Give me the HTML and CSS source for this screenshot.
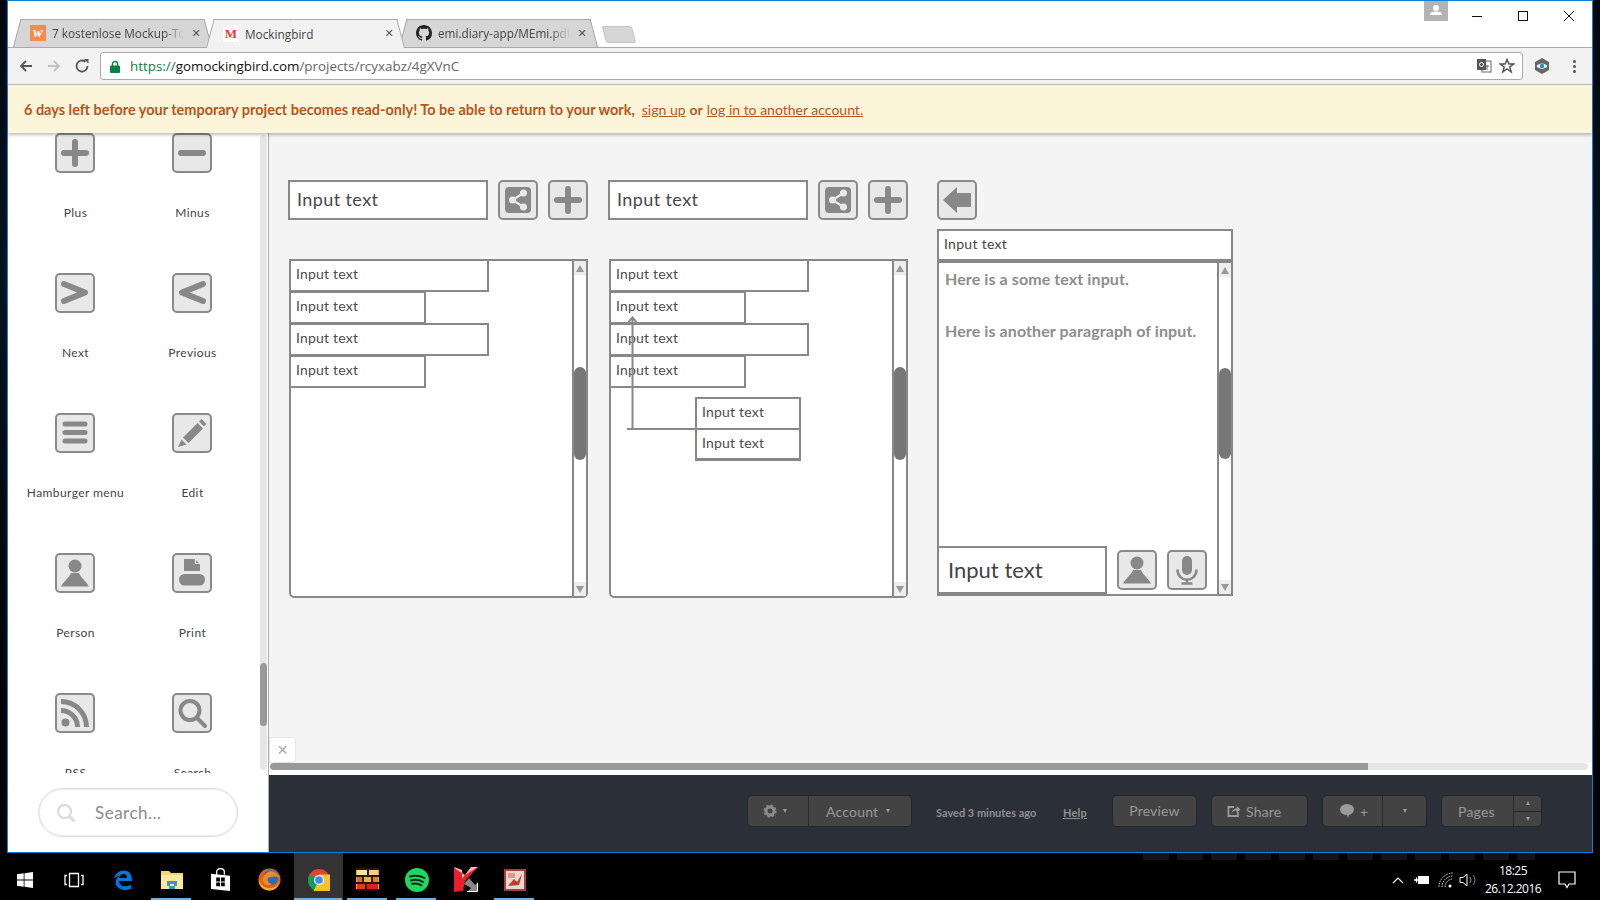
FILE: index.html
```html
<!DOCTYPE html>
<html lang="en">
<head>
<meta charset="utf-8">
<title>Mockingbird</title>
<link rel="stylesheet" href="styles.css">
</head>
<body>
<svg class="sprite" xmlns="http://www.w3.org/2000/svg">
  <symbol id="g-plus" viewBox="0 0 40 40"><path d="M9 20H31M20 9V31" class="st6"/></symbol>
  <symbol id="g-minus" viewBox="0 0 40 40"><path d="M9 20H31" class="st6"/></symbol>
  <symbol id="g-next" viewBox="0 0 40 40"><path d="M9 11L30 19.5L9 28" class="st6"/></symbol>
  <symbol id="g-prev" viewBox="0 0 40 40"><path d="M31 11L10 19.5L31 28" class="st6"/></symbol>
  <symbol id="g-burger" viewBox="0 0 40 40"><path d="M10 11H30M10 19.5H30M10 28H30" class="st5"/></symbol>
  <symbol id="g-edit" viewBox="0 0 40 40"><path class="fl" d="M11 24.500L25.500 10L31 15.500L16.500 30ZM9.500 26.500L14.500 31.500L6 34ZM27 8.500L29.500 6L34.500 11L32 13.500Z"/></symbol>
  <symbol id="g-person" viewBox="0 0 40 40"><circle class="fl" cx="20" cy="13" r="6.500"/><path class="fl" d="M6 33.500C9 28 14 25 16 20H24C26 25 31 28 34 33.500Z"/></symbol>
  <symbol id="g-print" viewBox="0 0 40 40"><path class="fl" d="M12 6H23L28 11V18H12Z"/><rect class="fl" x="7" y="21" width="26" height="11.500" rx="5.500"/><path d="M23.500 5.500V10.500H28.500" class="st-light"/></symbol>
  <symbol id="g-rss" viewBox="0 0 40 40"><circle class="fl" cx="10.500" cy="29.500" r="4"/><path d="M6 8.500A25.500 25.500 0 0 1 31.500 34M6 17.500A16.500 16.500 0 0 1 22.500 34" class="st-butt"/></symbol>
  <symbol id="g-search" viewBox="0 0 40 40"><circle cx="18" cy="17.500" r="9.500" class="st4"/><path d="M25 25L33 33" class="st4"/></symbol>
  <symbol id="g-share" viewBox="0 0 40 40"><rect class="fl" x="7" y="7" width="26" height="26" rx="4"/><path class="st-inner" d="M25.500 13L14.500 20L25.500 27"/><circle class="fl-light" cx="14.500" cy="20" r="3.500"/><circle class="fl-light" cx="25.500" cy="13" r="3.500"/><circle class="fl-light" cx="25.500" cy="27" r="3.500"/></symbol>
  <symbol id="g-back" viewBox="0 0 40 40"><path class="fl" d="M6 20L20 7V13H34V27H20V33Z"/></symbol>
  <symbol id="g-mic" viewBox="0 0 40 40"><rect class="fl" x="15" y="6" width="10" height="19" rx="5"/><path d="M10.500 19.500C10.500 33 29.500 33 29.500 19.500M20 29.500V33M14.500 33.500H25.500" class="st-mic"/></symbol>
</svg>

<div class="window">
  <header class="titlebar">
    <div class="tabs">
      <div class="tab">
        <span class="fav fav-w">w</span>
        <span class="tab-title">7 kostenlose Mockup-Tools</span>
        <span class="tab-x">✕</span>
      </div>
      <div class="tab tab-active">
        <span class="fav fav-m">M</span>
        <span class="tab-title">Mockingbird</span>
        <span class="tab-x">✕</span>
      </div>
      <div class="tab">
        <svg class="fav" viewBox="0 0 16 16"><path fill="#222" d="M8 0C3.58 0 0 3.58 0 8c0 3.54 2.29 6.53 5.47 7.59.4.07.55-.17.55-.38 0-.19-.01-.82-.01-1.49-2.01.37-2.53-.49-2.69-.94-.09-.23-.48-.94-.82-1.13-.28-.15-.68-.52-.01-.53.63-.01 1.08.58 1.23.82.72 1.21 1.87.87 2.33.66.07-.52.28-.87.51-1.07-1.78-.2-3.64-.89-3.64-3.95 0-.87.31-1.59.82-2.15-.08-.2-.36-1.02.08-2.12 0 0 .67-.21 2.2.82.64-.18 1.32-.27 2-.27.68 0 1.36.09 2 .27 1.53-1.04 2.2-.82 2.2-.82.44 1.1.16 1.92.08 2.12.51.56.82 1.27.82 2.15 0 3.07-1.87 3.75-3.65 3.95.29.25.54.73.54 1.48 0 1.07-.01 1.93-.01 2.2 0 .21.15.46.55.38A8.013 8.013 0 0016 8c0-4.420-3.580-8-8-8z"/></svg>
        <span class="tab-title">emi.diary-app/MEmi.pdf</span>
        <span class="tab-x">✕</span>
      </div>
      <div class="newtab"></div>
    </div>
    <div class="avatar">
      <svg viewBox="0 0 24 20" width="24" height="20"><circle cx="12" cy="7" r="3" fill="#fff"/><path d="M6 14C6 11 9 10.500 12 10.500S18 11 18 14Z" fill="#fff"/></svg>
    </div>
    <div class="winctl">
      <svg viewBox="0 0 12 12" width="12" height="12"><path d="M1 6.500H11" class="ctl"/></svg>
      <svg viewBox="0 0 12 12" width="12" height="12"><rect x="1.500" y="1.500" width="9" height="9" class="ctl"/></svg>
      <svg viewBox="0 0 12 12" width="12" height="12"><path d="M1 1L11 11M11 1L1 11" class="ctl"/></svg>
    </div>
  </header>

  <nav class="toolbar">
    <svg class="nav-ico" viewBox="0 0 16 16"><path d="M14 8H3M8 3L3 8L8 13" class="nav-st"/></svg>
    <svg class="nav-ico nav-off" viewBox="0 0 16 16"><path d="M2 8H13M8 3L13 8L8 13" class="nav-st"/></svg>
    <svg class="nav-ico" viewBox="0 0 16 16"><path d="M13.500 8A5.500 5.500 0 1 1 11.500 3.800" class="nav-st"/><path d="M10 1H14.500V5.500Z" fill="#555"/></svg>
    <div class="omnibox">
      <svg class="lock" viewBox="0 0 10 13" width="10" height="13"><path d="M2.500 6V4A2.500 2.500 0 0 1 7.500 4V6" fill="none" stroke="#0b8043" stroke-width="1.400"/><rect y="5.500" width="10" height="7.500" rx="1" fill="#0b8043"/></svg>
      <span class="url"><span class="url-s">https://</span><span class="url-h">gomockingbird.com</span>/projects/rcyxabz/4gXVnC</span>
      <svg class="omni-ico" viewBox="0 0 16 16" width="16" height="16"><rect x="6" y="3" width="9" height="11" fill="#fff" stroke="#666"/><rect x="1" y="1" width="9" height="11" fill="#555"/><circle cx="5.500" cy="6.500" r="2" fill="none" stroke="#fff"/><path d="M9.500 8H13M11 7V12" stroke="#666" fill="none"/></svg>
      <svg class="omni-ico" viewBox="0 0 16 16" width="16" height="16"><path d="M8 1.500L9.900 6H14.700L10.800 9L12.200 14L8 11L3.800 14L5.200 9L1.300 6H6.100Z" fill="none" stroke="#555" stroke-width="1.500"/></svg>
    </div>
    <svg class="ext" viewBox="0 0 18 18" width="18" height="18"><path d="M9 1L16 5V13L9 17L2 13V5Z" fill="#666"/><path d="M3.500 9C6.500 5.500 11.500 5.500 14.500 9C11.500 12.500 6.500 12.500 3.500 9Z" fill="#fff"/><circle cx="9" cy="9" r="2.200" fill="#1a8fc9"/></svg>
    <div class="dots"><i></i><i></i><i></i></div>
  </nav>

  <div class="banner">
    <strong class="banner-msg">6 days left before your temporary project becomes read-only! To be able to return to your work,</strong>
    <a class="banner-link">sign up</a>
    <strong class="banner-or">or</strong>
    <a class="banner-link">log in to another account.</a>
  </div>

  <main class="main">
    <aside class="sidebar">
      <div class="palette">
        <div class="pal-grid">
          <div class="pal-item"><svg class="tile"><use href="#g-plus"/></svg><span>Plus</span></div>
          <div class="pal-item"><svg class="tile"><use href="#g-minus"/></svg><span>Minus</span></div>
          <div class="pal-item"><svg class="tile"><use href="#g-next"/></svg><span>Next</span></div>
          <div class="pal-item"><svg class="tile"><use href="#g-prev"/></svg><span>Previous</span></div>
          <div class="pal-item"><svg class="tile"><use href="#g-burger"/></svg><span>Hamburger menu</span></div>
          <div class="pal-item"><svg class="tile"><use href="#g-edit"/></svg><span>Edit</span></div>
          <div class="pal-item"><svg class="tile"><use href="#g-person"/></svg><span>Person</span></div>
          <div class="pal-item"><svg class="tile"><use href="#g-print"/></svg><span>Print</span></div>
          <div class="pal-item"><svg class="tile"><use href="#g-rss"/></svg><span>RSS</span></div>
          <div class="pal-item"><svg class="tile"><use href="#g-search"/></svg><span>Search</span></div>
        </div>
        <div class="pal-scroll"><div class="pal-thumb"></div></div>
      </div>
      <div class="searchbox">
        <svg viewBox="0 0 20 20" width="20" height="20"><circle cx="8.500" cy="8.500" r="6.500" fill="none" stroke="#ddd" stroke-width="2.500"/><path d="M13 13L18.500 18.500" stroke="#ddd" stroke-width="3"/></svg>
        <span>Search...</span>
      </div>
    </aside>

    <section class="workspace">
      <div class="canvas">
        <div class="w-input w-in-a">Input text</div>
        <svg class="tile w-b-a"><use href="#g-share"/></svg>
        <svg class="tile w-b-b"><use href="#g-plus"/></svg>
        <div class="w-input w-in-b">Input text</div>
        <svg class="tile w-b-c"><use href="#g-share"/></svg>
        <svg class="tile w-b-d"><use href="#g-plus"/></svg>
        <svg class="tile w-b-e"><use href="#g-back"/></svg>

        <div class="list list-a">
          <div class="list-body">
            <div class="row row-long">Input text</div>
            <div class="row row-short">Input text</div>
            <div class="row row-long">Input text</div>
            <div class="row row-short">Input text</div>
          </div>
          <div class="vscroll">
            <div class="arrow arrow-up"></div>
            <div class="thumb"></div>
            <div class="arrow arrow-down"></div>
          </div>
        </div>

        <div class="list list-b">
          <div class="list-body">
            <div class="row row-long">Input text</div>
            <div class="row row-short">Input text</div>
            <div class="row row-long">Input text</div>
            <div class="row row-short">Input text</div>
          </div>
          <div class="vscroll">
            <div class="arrow arrow-up"></div>
            <div class="thumb"></div>
            <div class="arrow arrow-down"></div>
          </div>
        </div>
        <svg class="connector" viewBox="0 0 72 116" width="72" height="116"><path d="M5.500 3V113M0 113H72" fill="none" stroke="#888" stroke-width="2"/><path d="M1.500 6L5.500 1.500L9.500 6" fill="none" stroke="#888" stroke-width="2"/></svg>
        <div class="popup">
          <div class="pop-row">Input text</div>
          <div class="pop-row">Input text</div>
        </div>

        <div class="panel">
          <div class="panel-head">Input text</div>
          <div class="panel-body">
            <div class="panel-main">
              <p class="para">Here is a some text input.</p>
              <p class="para">Here is another paragraph of input.</p>
              <div class="panel-foot">
                <div class="foot-input">Input text</div>
                <svg class="tile"><use href="#g-person"/></svg>
                <svg class="tile"><use href="#g-mic"/></svg>
              </div>
            </div>
            <div class="vscroll vscroll-panel">
              <div class="arrow arrow-up"></div>
              <div class="thumb"></div>
              <div class="arrow arrow-down"></div>
            </div>
          </div>
        </div>

        <div class="closebox">✕</div>
      </div>
      <div class="hscroll"><div class="hthumb"></div></div>
      <footer class="footer">
        <div class="btn-group grp-account">
          <div class="btn-part part-gear">
            <svg viewBox="0 0 14 14" width="14" height="14"><circle cx="7" cy="7" r="4" fill="none" stroke="#8a8a8a" stroke-width="3"/><circle cx="7" cy="7" r="5.600" fill="none" stroke="#8a8a8a" stroke-width="2" stroke-dasharray="2.200 2.200"/></svg>
            <i class="caret"></i>
          </div>
          <div class="btn-part part-account">Account <i class="caret"></i></div>
        </div>
        <span class="saved">Saved 3 minutes ago</span>
        <a class="help">Help</a>
        <div class="btn btn-preview">Preview</div>
        <div class="btn btn-share">
          <svg viewBox="0 0 14 14" width="14" height="14"><path d="M7 3H1.500V12H11V8" fill="none" stroke="#9a9a9a" stroke-width="1.800"/><path d="M4.500 9C5 6 7 4.500 9.500 4.500V2L13.500 5.500L9.500 9V6.500C7.500 6.500 6 7.200 4.500 9Z" fill="#9a9a9a"/></svg>
          Share
        </div>
        <div class="btn-group grp-comment">
          <div class="btn-part part-bubble">
            <svg viewBox="0 0 16 14" width="16" height="14"><ellipse cx="8" cy="5.500" rx="7" ry="5.500" fill="#9a9a9a"/><path d="M7 9L9 14L10.500 9Z" fill="#9a9a9a"/></svg>
            <span>+</span>
          </div>
          <div class="btn-part part-drop"><i class="caret"></i></div>
        </div>
        <div class="btn-group grp-pages">
          <div class="btn-part part-pages">Pages</div>
          <div class="part-steps"><span class="step"><i class="caret caret-up"></i></span><span class="step"><i class="caret"></i></span></div>
        </div>
      </footer>
    </section>
  </main>
</div>

<div class="taskbar">
  <div class="wall-ghost"></div>
  <div class="tb-icons">
    <div class="tb-slot"><svg viewBox="0 0 16 16" width="16" height="16"><path fill="#fff" d="M0 2.300L6.700 1.300V7.600H0ZM7.500 1.200L16 0V7.600H7.500ZM0 8.400H6.700V14.700L0 13.700ZM7.500 8.400H16V16L7.500 14.800Z"/></svg></div>
    <div class="tb-slot"><svg viewBox="0 0 20 16" width="20" height="16"><path d="M5.500 1.500H14.500V14.500H5.500ZM3 3.500H1V12.500H3M17 3.500H19V12.500H17" fill="none" stroke="#fff" stroke-width="1.300"/></svg></div>
    <div class="tb-slot"><svg viewBox="0 0 22 22" width="20" height="20"><path fill="#0078d7" d="M1 10C2 4 7 0.500 12 0.500C18 0.500 21 5 21 12H6.500C7 16 10 18 13.500 18C16 18 18.500 17 20 16V20.500C18 21.500 15.500 22 13 22C6 22 2 17 3 12.500C3.500 10 5 7.500 7.500 6C5 6.500 2.500 8 1 10ZM6.800 8.800H15.500C15.500 5.800 13.800 4.300 11.500 4.300C9 4.300 7.300 6 6.800 8.800Z"/></svg></div>
    <div class="tb-slot tb-run"><svg viewBox="0 0 22 20" width="22" height="20"><path d="M0 1H8L10 3H22V18H0Z" fill="#f6d76b"/><path d="M0 5H22V19H0Z" fill="#fbe9a0"/><path d="M6 16V11H16V16H13V14H9V16Z" fill="#2e9bd8"/><path d="M8 16H14V19H8Z" fill="#2e9bd8"/></svg></div>
    <div class="tb-slot"><svg viewBox="0 0 22 25" width="21" height="24"><path d="M7 7V4C7 1.500 9 0.500 11 0.500S15 1.500 15 4V7" fill="none" stroke="#fff" stroke-width="1.300"/><path d="M1 6L21 8V24L1 22Z" fill="#fff"/><path d="M6.500 10H10.500V14H6.500ZM11.500 10H15.500V14H11.500ZM6.500 15H10.500V19H6.500ZM11.500 15H15.500V19H11.500Z" fill="#000"/></svg></div>
    <div class="tb-slot"><svg viewBox="0 0 24 24" width="23" height="23"><circle cx="12" cy="12" r="11.500" fill="#e2601c"/><circle cx="13.500" cy="10" r="8" fill="#2a6fb5"/><path d="M13 3C18 3 22 7 22.500 11C20 8.500 17 8.500 15 9.500C12 9 10 10.500 10 12.500C10 15 12.500 17 15 16.500C12 19 7 18 5 14C4 10 7 5 13 3Z" fill="#f08a24"/><path d="M1 12C2 18 8 22 14 21C18 20.500 21.500 17 22.500 13C22 19 17 23.500 12 23.500C5 23.500 0 18 1 12Z" fill="#f9b21d"/></svg></div>
    <div class="tb-slot tb-active tb-run"><svg viewBox="0 0 22 22" width="22" height="22"><circle cx="11" cy="11" r="11" fill="#db4437"/><path d="M11 11L1.500 5.500A11 11 0 0 0 11 22L16.500 11Z" fill="#0f9d58"/><path d="M11 11L5.500 22A11 11 0 0 0 21.500 5.500H11Z" fill="#fbc02d"/><circle cx="11" cy="11" r="5" fill="#fff"/><circle cx="11" cy="11" r="3.800" fill="#4285f4"/></svg></div>
    <div class="tb-slot tb-run"><svg viewBox="0 0 23 23" width="23" height="23"><rect width="23" height="23" fill="#f0a033"/><path d="M1 2H11V7H1Z" fill="#fbe39a"/><path d="M13 2H22V7H13Z" fill="#f7d27a"/><path d="M1 9H6V14H1Z" fill="#e8672a"/><path d="M8 9H15V14H8Z" fill="#f9b03a"/><path d="M17 9H22V14H17Z" fill="#ee7a2c"/><path d="M1 16H9V21H1Z" fill="#e33b22"/><path d="M11 16H22V21H11Z" fill="#d4261b"/><path d="M0 0H23V2H0ZM0 7H23V9H0ZM0 14H23V16H0ZM0 21H23V23H0ZM11 0H13V7H11ZM6 9H8V14H6ZM15 9H17V14H15ZM9 16H11V21H9Z" fill="#2a1406"/></svg></div>
    <div class="tb-slot tb-run"><svg viewBox="0 0 24 24" width="24" height="24"><circle cx="12" cy="12" r="12" fill="#1ed760"/><path d="M5 8.500C10 7 15 7.500 19.500 10M6 12.500C10 11.300 14.500 11.800 18 14M7 16C10 15.200 13.500 15.500 16.500 17.300" fill="none" stroke="#0b2a16" stroke-width="2" stroke-linecap="round"/></svg></div>
    <div class="tb-slot"><svg viewBox="0 0 25 25" width="25" height="25"><path d="M1 0L9 3V12L18 0H25L12 14L10 24L1 25Z" fill="#e8202e"/><path d="M1 0L9 3V12L18 0H25L12 8L4 3Z" fill="#f6b6b8"/><path d="M11 17L16 11L22 18L25 15V24H15L18 21Z" fill="#888"/><path d="M14 24.500H24.500V16" fill="none" stroke="#fff" stroke-width="1"/></svg></div>
    <div class="tb-slot tb-run"><svg viewBox="0 0 22 22" width="22" height="22"><rect width="22" height="22" fill="#a5403a"/><rect x="2" y="2" width="18" height="18" fill="#e9d6d0"/><path d="M4 17L10 10L13 13L18 5L15 16Z" fill="#c9372c"/><path d="M4 4H11V9H4Z" fill="#d99a92"/></svg></div>
  </div>
  <div class="tray">
    <svg class="tray-chev" viewBox="0 0 12 8" width="12" height="8"><path d="M1 7L6 2L11 7" fill="none" stroke="#fff" stroke-width="1.200"/></svg>
    <svg viewBox="0 0 16 12" width="16" height="12"><rect x="4.500" y="2.500" width="10" height="7" fill="#fff" stroke="#fff"/><path d="M0 6H4M2.500 3.500V8.500" fill="none" stroke="#fff" stroke-width="1.300"/></svg>
    <svg class="tray-wifi" viewBox="0 0 16 16" width="16" height="16"><path d="M1 15A14 14 0 0 1 15 1M4 15A11 11 0 0 1 15 4M7 15A8 8 0 0 1 15 7" fill="none" stroke="#ddd" stroke-width="1" stroke-dasharray="1.500 1"/><circle cx="12" cy="14" r="1.500" fill="#fff"/></svg>
    <svg viewBox="0 0 18 16" width="18" height="16"><path d="M1 5.500H4L8 2V14L4 10.500H1Z" fill="none" stroke="#fff"/><path d="M11 5A5 5 0 0 1 11 11M14 3A8 8 0 0 1 14 13" fill="none" stroke="#888"/></svg>
    <div class="clock"><span>18:25</span><span>26.12.2016</span></div>
    <svg class="notif" viewBox="0 0 18 18" width="18" height="18"><path d="M1 1H17V13H11L9 16.500L7 13H1Z" fill="none" stroke="#fff" stroke-width="1.200"/></svg>
  </div>
</div>
</body>
</html>
```

FILE: styles.css
```css
* { box-sizing: border-box; }
html, body { margin: 0; padding: 0; }
body {
  width: 1600px;
  height: 900px;
  overflow: hidden;
  background: linear-gradient(180deg, #02070d 0%, #041421 30%, #02090f 60%, #000 100%);
  display: flex;
  flex-direction: column;
  font-family: "Lato", "Noto Sans", sans-serif;
}
.sprite { display: none; }
.fl { fill: #888; }
.fl-light { fill: #e8e8e8; }
.st6 { fill: none; stroke: #888; stroke-width: 6; stroke-linecap: round; stroke-linejoin: round; }
.st5 { fill: none; stroke: #888; stroke-width: 5; stroke-linecap: round; }
.st4 { fill: none; stroke: #888; stroke-width: 4; stroke-linecap: round; }
.st-butt { fill: none; stroke: #888; stroke-width: 5; }
.st-light { fill: none; stroke: #e8e8e8; stroke-width: 1.200; }
.st-inner { fill: none; stroke: #e8e8e8; stroke-width: 2.200; }
.st-mic { fill: none; stroke: #888; stroke-width: 2.500; }

.window {
  width: 1586px;
  height: 853px;
  margin-left: 7px;
  border: 1px solid #0f7fd8;
  display: flex;
  flex-direction: column;
  flex: none;
}

/* title bar */
.titlebar {
  height: 46px;
  background: #fff;
  display: flex;
  flex: none;
  position: relative;
}
.tabs {
  display: flex;
  align-items: flex-end;
  padding-left: 5px;
  height: 46px;
  font-family: "Open Sans", sans-serif;
  font-size: 11.800px;
  color: #444;
}
.tab {
  position: relative;
  z-index: 1;
  width: 199px;
  height: 28px;
  margin-right: -6px;
  display: flex;
  align-items: center;
  padding: 0 10px 0 17px;
  gap: 6px;
  isolation: isolate;
}
.tab::before, .tab::after {
  content: "";
  position: absolute;
  top: 0;
  bottom: 0;
  width: 52%;
  background: #d6d6d6;
  border-top: 1px solid #a9a9a9;
  z-index: -1;
}
.tab::before {
  left: 0;
  border-left: 1px solid #a9a9a9;
  transform-origin: bottom left;
  transform: skewX(-15deg);
}
.tab::after {
  right: 0;
  border-right: 1px solid #a9a9a9;
  transform-origin: bottom right;
  transform: skewX(15deg);
}
.tab-active { z-index: 2; height: 29px; margin-bottom: -1px; }
.tab-active::before, .tab-active::after { background: #f2f2f2; }
.fav {
  width: 16px;
  height: 16px;
  flex: none;
  display: flex;
  align-items: center;
  justify-content: center;
}
.fav-w {
  background: #f58c4e;
  color: #fff;
  font: italic bold 14px "Liberation Serif", serif;
}
.fav-m {
  background: #fff;
  color: #e33;
  font: bold 13px "Liberation Serif", serif;
}
.tab-title {
  flex: 1;
  min-width: 0;
  white-space: nowrap;
  overflow: hidden;
  -webkit-mask-image: linear-gradient(90deg, #000 85%, transparent);
  mask-image: linear-gradient(90deg, #000 85%, transparent);
}
.tab-active .tab-title { -webkit-mask-image: none; mask-image: none; }
.tab-x { flex: none; width: 12px; font-size: 11px; color: #555; text-align: center; font-family: "DejaVu Sans", sans-serif; }
.newtab {
  width: 30px;
  height: 17px;
  margin: 0 0 4px 12px;
  background: #d6d6d6;
  border: 1px solid #c4c4c4;
  border-radius: 2px;
  transform: skewX(15deg);
}
.avatar {
  margin-left: auto;
  width: 24px;
  height: 20px;
  background: #b3b3b3;
}
.winctl {
  display: flex;
  gap: 34px;
  padding: 9px 17px 0 23px;
  align-items: flex-start;
}
.ctl { fill: none; stroke: #111; stroke-width: 1; }

/* toolbar */
.toolbar {
  height: 38px;
  flex: none;
  background: #f2f2f2;
  border-top: 1px solid #aaa;
  border-bottom: 1px solid #b8b8b8;
  display: flex;
  align-items: center;
  padding-left: 10px;
}
.nav-ico { width: 16px; height: 16px; margin-right: 12px; flex: none; }
.nav-off { opacity: .3; }
.nav-st { fill: none; stroke: #555; stroke-width: 1.800; }
.omnibox {
  width: 1423px;
  height: 28px;
  margin-left: -2px;
  background: #fff;
  border: 1px solid #aaa;
  border-radius: 3px;
  display: flex;
  align-items: center;
  padding: 0 7px 0 9px;
  gap: 7px;
}
.lock { flex: none; margin-right: 3px; }
.url {
  flex: 1;
  font-family: "Open Sans", sans-serif;
  font-size: 13.400px;
  color: #666;
  white-space: nowrap;
}
.url-s { color: #0b8043; }
.url-h { color: #111; }
.ext { margin-left: 10px; flex: none; }
.dots { margin-left: 22px; display: flex; flex-direction: column; gap: 2px; }
.dots i { width: 3px; height: 3px; background: #555; border-radius: 50%; display: block; }

/* banner */
.banner {
  height: 48px;
  flex: none;
  background: #fdf5d9;
  box-shadow: 0 2px 3px rgba(0,0,0,.25);
  position: relative;
  z-index: 3;
  display: flex;
  align-items: center;
  padding-left: 16px;
  font-size: 14px;
  color: #b5561c;
  white-space: pre;
}
.banner-msg { font-weight: 700; font-size: 14.480px; }
.banner-or { font-weight: 700; margin: 0 4px; }
.banner-link { text-decoration: underline; margin-left: 0; }
.banner-msg + .banner-link { margin-left: 7px; }

/* main */
.main { flex: 1; min-height: 0; display: flex; }
.sidebar {
  width: 261px;
  flex: none;
  background: #fff;
  border-right: 1px solid #aaa;
  display: flex;
  flex-direction: column;
}
.palette {
  height: 640px;
  position: relative;
  overflow: hidden;
  flex: none;
}
.pal-grid {
  display: grid;
  grid-template-columns: 117px 117px;
  grid-auto-rows: 140px;
  padding-left: 8px;
}
.pal-item {
  display: flex;
  flex-direction: column;
  align-items: center;
  font-size: 12px;
  color: #444;
  gap: 32px;
  letter-spacing: .4px;
}
.pal-item span { line-height: 16px; white-space: nowrap; padding-left: 2px; }
.tile {
  width: 40px;
  height: 40px;
  background: #e8e8e8;
  border-radius: 5px;
  outline: 2px solid #8a8a8a;
  outline-offset: -2px;
  flex: none;
  display: block;
}
.pal-scroll {
  position: absolute;
  left: 252px;
  top: 2px;
  bottom: 3px;
  width: 7px;
  background: #e6e6e6;
  border-radius: 4px;
}
.pal-thumb {
  margin-top: 528px;
  height: 63px;
  background: #999;
  border-radius: 4px;
}
.searchbox {
  width: 200px;
  height: 49px;
  margin: 15px 0 0 30px;
  border: 1px solid #ddd;
  box-shadow: inset 0 0 0 1px #eee;
  border-radius: 25px;
  display: flex;
  align-items: center;
  gap: 19px;
  padding-left: 17px;
  font-size: 17px;
  letter-spacing: .5px;
  color: #8c8c8c;
}

/* canvas */
.workspace { flex: 1; min-width: 0; display: flex; flex-direction: column; }
.canvas { height: 630px; flex: none; position: relative; background: #f4f4f4; overflow: hidden; }
.w-input {
  position: absolute;
  top: 47px;
  width: 200px;
  height: 40px;
  background: #fff;
  border: 2px solid #888;
  padding: 0 0 2px 7px;
  display: flex;
  align-items: center;
  font-size: 18px;
  letter-spacing: .4px;
  color: #484848;
}
.w-in-a { left: 19px; }
.w-in-b { left: 339px; }
.w-b-a, .w-b-b, .w-b-c, .w-b-d, .w-b-e { position: absolute; top: 47px; }
.w-b-a { left: 229px; }
.w-b-b { left: 279px; }
.w-b-c { left: 549px; }
.w-b-d { left: 599px; }
.w-b-e { left: 668px; }

.list {
  position: absolute;
  top: 126px;
  width: 299px;
  height: 339px;
  background: #fff;
  border: 2px solid #888;
  border-radius: 0 0 5px 5px;
  display: flex;
}
.list-a { left: 20px; }
.list-b { left: 340px; }
.list-body { flex: 1; min-width: 0; margin: -2px 0 0 -2px; }
.row {
  height: 33px;
  margin-bottom: -1px;
  border: 2px solid #888;
  background: #fff;
  padding: 0 0 5px 5px;
  display: flex;
  align-items: center;
  font-size: 14px;
  letter-spacing: .2px;
  color: #4c4c4c;
}
.row-long { width: 200px; }
.row-short { width: 137px; }
.vscroll {
  width: 14px;
  flex: none;
  border-left: 2px solid #888;
  background: #fff;
  display: flex;
  flex-direction: column;
  align-items: stretch;
}
.arrow {
  height: 14px;
  background: #eee;
  display: flex;
  align-items: center;
  justify-content: center;
  flex: none;
}
.arrow::after {
  content: "";
  border-left: 4px solid transparent;
  border-right: 4px solid transparent;
}
.arrow-up::after { border-bottom: 7px solid #999; }
.arrow-down { margin-top: auto; }
.arrow-down::after { border-top: 7px solid #999; }
.thumb {
  margin-top: 92px;
  height: 93px;
  background: #777;
  border-radius: 6px;
  flex: none;
}
.vscroll-panel .thumb { margin-top: 91px; height: 91px; }
.connector { position: absolute; left: 358px; top: 183px; }
.popup {
  position: absolute;
  left: 426px;
  top: 264px;
  width: 106px;
  height: 64px;
  background: #fff;
  border: 2px solid #888;
  border-bottom-width: 3px;
  display: flex;
  flex-direction: column;
}
.pop-row {
  flex: 1 1 0;
  display: flex;
  align-items: center;
  padding: 0 0 4px 5px;
  font-size: 14px;
  letter-spacing: .2px;
  color: #4c4c4c;
}
.pop-row + .pop-row { border-top: 2px solid #888; padding-bottom: 3px; }
.panel {
  position: absolute;
  left: 668px;
  top: 96px;
  width: 296px;
  height: 367px;
  background: #fff;
  border: 2px solid #888;
  display: flex;
  flex-direction: column;
}
.panel-head {
  height: 32px;
  flex: none;
  padding: 0 0 3px 5px;
  display: flex;
  align-items: center;
  font-size: 14px;
  letter-spacing: .3px;
  color: #444;
  border-bottom: 4px solid #888;
}
.panel-body { flex: 1; min-height: 0; display: flex; }
.panel-main {
  flex: 1;
  min-width: 0;
  display: flex;
  flex-direction: column;
}
.para {
  margin: 6px 0 0;
  padding-left: 6px;
  font-size: 16px;
  font-weight: 700;
  letter-spacing: .1px;
  line-height: 20px;
  color: #8d8d8d;
}
.para + .para { margin-top: 32px; }
.panel-foot {
  margin-top: auto;
  display: flex;
  align-items: center;
  gap: 10px;
  height: 48px;
}
.foot-input {
  width: 168px;
  height: 48px;
  border: solid #888;
  border-width: 2px 2px 2px 0;
  padding: 0 0 2px 9px;
  display: flex;
  align-items: center;
  font-size: 22px;
  color: #444;
}
.closebox {
  position: absolute;
  left: 0;
  bottom: 0;
  width: 27px;
  height: 26px;
  background: #fff;
  border: 1px solid #e5e5e5;
  border-radius: 0 3px 3px 0;
  display: flex;
  align-items: center;
  justify-content: center;
  font-family: "DejaVu Sans", sans-serif;
  font-size: 14px;
  font-weight: 700;
  color: #aaa;
}
.hscroll {
  height: 12px;
  flex: none;
  background: #fff;
  padding: 0 4px 0 1px;
}
.hthumb {
  height: 7px;
  background: linear-gradient(90deg, #999 0, #999 1098px, #e6e6e6 1098px, #e6e6e6 100%);
  border-radius: 4px;
}

/* footer */
.footer {
  height: 77px;
  flex: 1;
  background: #2b3038;
  display: flex;
  align-items: flex-start;
  padding: 20px 0 0 478px;
  font-size: 14px;
  letter-spacing: .2px;
  color: #999;
}
.btn, .btn-group {
  height: 32px;
  background: #434343;
  border: 1px solid #23262b;
  border-radius: 5px;
  display: flex;
  align-items: center;
  flex: none;
}
.btn-part { height: 100%; display: flex; align-items: center; }
.btn-part + .btn-part, .part-steps { border-left: 1px solid #2b2b2b; }
.caret {
  display: inline-block;
  border-left: 2.500px solid transparent;
  border-right: 2.500px solid transparent;
  border-top: 4px solid #999;
}
.caret-up { border-top: 0; border-bottom: 4px solid #999; }
.grp-account { width: 165px; }
.part-gear { width: 60px; padding-left: 15px; gap: 6px; }
.part-account { flex: 1; padding-left: 17px; gap: 8px; }
.saved { margin: 11px 0 0 24px; width: 127px; font-size: 11px; font-weight: 700; color: #8f8f8f; letter-spacing: 0; white-space: nowrap; }
.help { margin-top: 11px; width: 49px; font-size: 11px; font-weight: 700; color: #8f8f8f; text-decoration: underline; }
.btn-preview { width: 85px; justify-content: center; padding-bottom: 1px; }
.btn-share { width: 97px; margin-left: 14px; padding-left: 15px; gap: 5px; }
.grp-comment { width: 105px; margin-left: 14px; }
.part-bubble { width: 59px; padding-left: 16px; gap: 5px; }
.part-drop { flex: 1; justify-content: center; }
.grp-pages { width: 101px; margin-left: 14px; }
.part-pages { width: 71px; padding-left: 16px; }
.part-steps { flex: 1; height: 100%; display: flex; flex-direction: column; }
.step { flex: 1; display: flex; align-items: center; justify-content: center; }
.step + .step { border-top: 1px solid #2b2b2b; }

/* taskbar */
.taskbar {
  flex: 1;
  background: #000;
  position: relative;
  display: flex;
  align-items: stretch;
}
.wall-ghost {
  position: absolute;
  left: 1143px;
  top: 0;
  width: 392px;
  height: 7px;
  background: repeating-linear-gradient(90deg, #141414 0, #141414 26px, #000 26px, #000 34px);
}
.tb-icons { display: flex; position: relative; }
.tb-slot {
  width: 49px;
  height: 47px;
  display: flex;
  align-items: center;
  justify-content: center;
  position: relative;
  padding-top: 6px;
}
.tb-run::after {
  content: "";
  position: absolute;
  left: 4px;
  right: 5px;
  bottom: 0;
  height: 2px;
  background: #6cb0e8;
}
.tb-active { background: #333; }
.tb-active::after { left: 0; right: 1px; }
.tray {
  margin-left: auto;
  display: flex;
  align-items: center;
  gap: 8px;
  padding: 6px 24px 0 0;
  position: relative;
}
.tray-chev { margin-right: 2px; }
.tray-wifi { margin-right: -3px; }
.clock {
  width: 56px;
  display: flex;
  flex-direction: column;
  align-items: center;
  gap: 4px;
  font-size: 12px;
  letter-spacing: -.5px;
  line-height: 14px;
  color: #fff;
  font-family: "Open Sans", sans-serif;
}
.notif { margin-left: 9px; }
```
